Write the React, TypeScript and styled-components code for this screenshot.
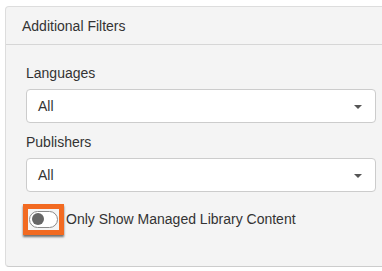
import styled, { createGlobalStyle } from "styled-components";
import { useState } from "react";

const GlobalStyle = createGlobalStyle`
  html, body {
    margin: 0;
    padding: 0;
    background: #ffffff;
  }
  body {
    overflow: hidden;
    font-family: "Liberation Sans", Arial, sans-serif;
    color: #333333;
  }
`;

const Page = styled.div`
  padding: 6px 0 0 5px;
  width: 382px;
  height: 271px;
  box-sizing: border-box;
  overflow: hidden;
`;

const Panel = styled.div`
  width: 392px;
  background: #f4f4f4;
  border: 1px solid #dddddd;
  border-bottom-color: #cccccc;
  border-radius: 4px;
  box-sizing: border-box;
`;

const PanelHeading = styled.div`
  height: 37px;
  display: flex;
  align-items: center;
  padding-left: 16px;
  font-size: 14px;
  color: #333333;
  border-bottom: 1px solid #d6d6d6;
`;

const PanelBody = styled.div`
  padding: 19px 20px 31px 20px;
`;

const Field = styled.div<{ $gap: number }>`
  display: flex;
  flex-direction: column;
  margin-bottom: ${(p) => p.$gap}px;
`;

const Label = styled.label`
  font-size: 14px;
  line-height: 18px;
  margin-bottom: 7px;
  color: #333333;
`;

const Select = styled.div`
  position: relative;
  height: 34px;
  box-sizing: border-box;
  background: #ffffff;
  border: 1px solid #cccccc;
  border-radius: 4px;
  display: flex;
  align-items: center;
  padding-left: 11px;
  font-size: 14px;
  color: #333333;
`;

const Caret = styled.span`
  position: absolute;
  right: 13px;
  top: 15px;
  width: 0;
  height: 0;
  border-left: 4px solid transparent;
  border-right: 4px solid transparent;
  border-top: 4px solid #555555;
`;

const ToggleRow = styled.div`
  display: flex;
  align-items: center;
  height: 32px;
  margin-left: -3px;
`;

const Highlight = styled.span`
  display: flex;
  align-items: center;
  justify-content: center;
  width: 41px;
  height: 31px;
  box-sizing: border-box;
  border: 5px solid #f26a21;
  box-shadow: 0 2px 2px rgba(0, 0, 0, 0.55);
  margin-right: 2px;
`;

const Track = styled.button<{ $on: boolean }>`
  position: relative;
  width: 29px;
  height: 17px;
  padding: 0;
  border: 1.5px solid #8a8a8a;
  border-radius: 9px;
  background: ${(p) => (p.$on ? "#5cb85c" : "#ffffff")};
  cursor: pointer;
`;

const Thumb = styled.span<{ $on: boolean }>`
  position: absolute;
  top: 1px;
  left: ${(p) => (p.$on ? "13px" : "1.5px")};
  width: 12px;
  height: 12px;
  border-radius: 50%;
  background: #666666;
`;

const ToggleText = styled.span`
  font-size: 14px;
  color: #333333;
`;

const App = () => {
  const [managed, setManaged] = useState(false);

  return (
    <Page>
      <GlobalStyle />
      <Panel>
        <PanelHeading>Additional Filters</PanelHeading>
        <PanelBody>
          <Field $gap={10}>
            <Label>Languages</Label>
            <Select>
              All
              <Caret />
            </Select>
          </Field>
          <Field $gap={11}>
            <Label>Publishers</Label>
            <Select>
              All
              <Caret />
            </Select>
          </Field>
          <ToggleRow>
            <Highlight>
              <Track $on={managed} onClick={() => setManaged(!managed)}>
                <Thumb $on={managed} />
              </Track>
            </Highlight>
            <ToggleText>Only Show Managed Library Content</ToggleText>
          </ToggleRow>
        </PanelBody>
      </Panel>
    </Page>
  );
};

export default App;
